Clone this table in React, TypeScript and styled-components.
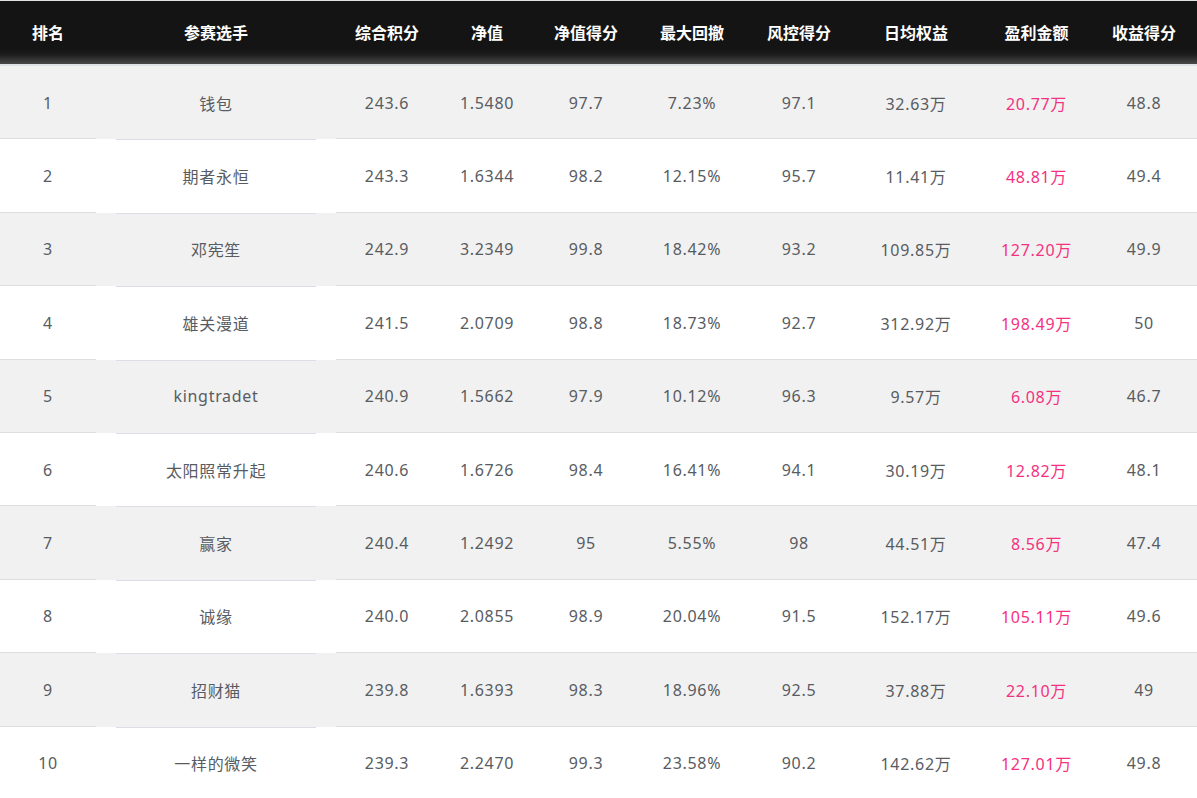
import React from "react";
import styled, { createGlobalStyle } from "styled-components";

const GlobalStyle = createGlobalStyle`
  html, body {
    margin: 0;
    padding: 0;
    background: #fff;
  }
  body {
    font-family: "Noto Sans", "Noto Sans CJK SC", sans-serif;
  }
`;

const COLS = "96px 240px 102px 98px 100px 112px 102px 132px 109px 106px";

type Row = {
  rank: string;
  name: string;
  total: string;
  nav: string;
  navScore: string;
  drawdown: string;
  riskScore: string;
  equity: string;
  profit: string;
  profitScore: string;
};

const rows: Row[] = [
  { rank: "1", name: "钱包", total: "243.6", nav: "1.5480", navScore: "97.7", drawdown: "7.23%", riskScore: "97.1", equity: "32.63万", profit: "20.77万", profitScore: "48.8" },
  { rank: "2", name: "期者永恒", total: "243.3", nav: "1.6344", navScore: "98.2", drawdown: "12.15%", riskScore: "95.7", equity: "11.41万", profit: "48.81万", profitScore: "49.4" },
  { rank: "3", name: "邓宪笙", total: "242.9", nav: "3.2349", navScore: "99.8", drawdown: "18.42%", riskScore: "93.2", equity: "109.85万", profit: "127.20万", profitScore: "49.9" },
  { rank: "4", name: "雄关漫道", total: "241.5", nav: "2.0709", navScore: "98.8", drawdown: "18.73%", riskScore: "92.7", equity: "312.92万", profit: "198.49万", profitScore: "50" },
  { rank: "5", name: "kingtradet", total: "240.9", nav: "1.5662", navScore: "97.9", drawdown: "10.12%", riskScore: "96.3", equity: "9.57万", profit: "6.08万", profitScore: "46.7" },
  { rank: "6", name: "太阳照常升起", total: "240.6", nav: "1.6726", navScore: "98.4", drawdown: "16.41%", riskScore: "94.1", equity: "30.19万", profit: "12.82万", profitScore: "48.1" },
  { rank: "7", name: "赢家", total: "240.4", nav: "1.2492", navScore: "95", drawdown: "5.55%", riskScore: "98", equity: "44.51万", profit: "8.56万", profitScore: "47.4" },
  { rank: "8", name: "诚缘", total: "240.0", nav: "2.0855", navScore: "98.9", drawdown: "20.04%", riskScore: "91.5", equity: "152.17万", profit: "105.11万", profitScore: "49.6" },
  { rank: "9", name: "招财猫", total: "239.8", nav: "1.6393", navScore: "98.3", drawdown: "18.96%", riskScore: "92.5", equity: "37.88万", profit: "22.10万", profitScore: "49" },
  { rank: "10", name: "一样的微笑", total: "239.3", nav: "2.2470", navScore: "99.3", drawdown: "23.58%", riskScore: "90.2", equity: "142.62万", profit: "127.01万", profitScore: "49.8" },
];

const headers = ["排名", "参赛选手", "综合积分", "净值", "净值得分", "最大回撤", "风控得分", "日均权益", "盈利金额", "收益得分"];

const Board = styled.div`
  width: 1197px;
  border-top: 1px solid #e2e2e2;
`;

const Header = styled.div`
  display: grid;
  grid-template-columns: ${COLS};
  height: 63px;
  background: linear-gradient(to bottom, #141414 0, #141414 48px, #1e1e1e 54px, #4a4a4a 63px);
  border-bottom: 2px solid #dfe2e7;
`;

const HeadCell = styled.div`
  display: flex;
  align-items: center;
  justify-content: center;
  padding-bottom: 2px;
  color: #fff;
  font-size: 16px;
  font-weight: bold;
  font-family: "Noto Sans CJK SC", sans-serif;
`;

const BodyRow = styled.div<{ $shade: boolean }>`
  display: grid;
  grid-template-columns: ${COLS};
  height: 73.4px;
  background: ${(p) => (p.$shade ? "#f1f1f1" : "#fff")};
`;

const Cell = styled.div<{ $pink?: boolean; $wide?: boolean }>`
  position: relative;
  display: flex;
  align-items: center;
  justify-content: center;
  color: ${(p) => (p.$pink ? "#f5317f" : "#585c62")};
  font-size: 16px;
  letter-spacing: 0.7px;

  &::after {
    content: "";
    position: absolute;
    left: ${(p) => (p.$wide ? "20px" : "0")};
    right: ${(p) => (p.$wide ? "20px" : "0")};
    bottom: ${(p) => (p.$wide ? "-1px" : "0")};
    height: 1px;
    background: ${(p) => (p.$wide ? "#dcdde6" : "#dedede")};
  }
`;

export default function App() {
  return (
    <>
      <GlobalStyle />
      <Board>
        <Header>
          {headers.map((h) => (
            <HeadCell key={h}>{h}</HeadCell>
          ))}
        </Header>
        {rows.map((r, i) => (
          <BodyRow key={r.rank} $shade={i % 2 === 0}>
            <Cell>{r.rank}</Cell>
            <Cell $wide>{r.name}</Cell>
            <Cell>{r.total}</Cell>
            <Cell>{r.nav}</Cell>
            <Cell>{r.navScore}</Cell>
            <Cell>{r.drawdown}</Cell>
            <Cell>{r.riskScore}</Cell>
            <Cell>{r.equity}</Cell>
            <Cell $pink>{r.profit}</Cell>
            <Cell>{r.profitScore}</Cell>
          </BodyRow>
        ))}
      </Board>
    </>
  );
}
